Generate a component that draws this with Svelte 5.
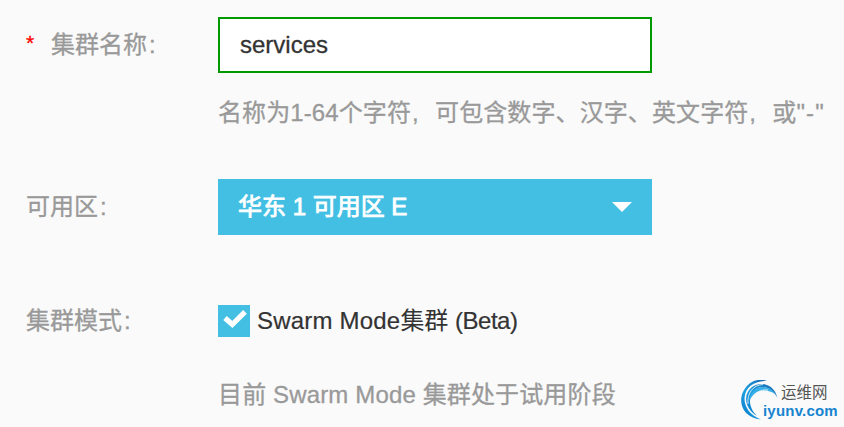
<script>
	let name = 'services';
	let swarm = true;
</script>

<form on:submit|preventDefault>
	<div class="row">
		<label class="label" for="name"><span class="required">*</span>集群名称<i class="colon">:</i></label>
		<div class="field">
			<input id="name" class="name" type="text" bind:value={name} />
			<p class="hint first">名称为1-64个字符<i class="comma">,</i>可包含数字、汉字、英文字符<i class="comma">,</i>或<span class="quoted">"-"</span></p>
		</div>
	</div>

	<div class="row zone">
		<span class="label">可用区<i class="colon">:</i></span>
		<button type="button" class="select">
			<span>华东 1 可用区 E</span>
			<svg width="20" height="10" viewBox="0 0 20 10"><path d="M0 0h20L10 10z" fill="#fff" /></svg>
		</button>
	</div>

	<div class="row mode">
		<span class="label">集群模式<i class="colon">:</i></span>
		<div class="field">
			<label class="check">
				<input type="checkbox" bind:checked={swarm} />
				<span class="box">
					{#if swarm}
						<svg width="32" height="32" viewBox="0 0 32 32">
							<path d="M7 13l7.3 6.5L27 6.8" fill="none" stroke="#fff" stroke-width="5.2" />
						</svg>
					{/if}
				</span>
				<span class="text"><span class="latin">Swarm Mode</span>集群 <span class="beta">(Beta)</span></span>
			</label>
			<p class="hint second">目前 Swarm Mode 集群处于试用阶段</p>
		</div>
	</div>
</form>

<div class="watermark">
	<svg width="104" height="47" viewBox="0 0 104 47">
		<defs>
			<linearGradient id="arc" x1="0" y1="1" x2="1" y2="0">
				<stop offset="0" stop-color="#0a78c8" />
				<stop offset=".45" stop-color="#1ba0e2" />
				<stop offset="1" stop-color="#1d62a8" />
			</linearGradient>
		</defs>
		<path d="M21 39.5C3 38-3 22 4 10 10 0 20-2 27 1 16 1 9 5 5.500 13 2 23 8 35 21 39.500z" fill="url(#arc)" />
		<path d="M17 36C4 28 3 14 12 7c9-6 22-3 25.500 11C31 6 20 4 13.500 11.500c-6 7-4 17 3.500 24.500z" fill="url(#arc)" />
		<path d="M9.500 21C10 12 16 6.500 23 7c5 0 10 3 12 7-8-6-21-5-25.500 7z" fill="#35aee8" />
		<path d="M8 24C7 13 13 5 23 4.500M11 23c1-9 8-14 17-13" fill="none" stroke="#fafafa" stroke-width=".8" />
	</svg>
	<span class="brand">运维网</span>
	<span class="domain">iyunv.com</span>
</div>

<style>
	:global(body) {
		background: #fafafa;
		overflow: hidden;
	}

	form {
		box-sizing: border-box;
		height: 427px;
		padding: 17px 0 0 26px;
		color: #999;
		font: 24px/32px 'Liberation Sans', 'Noto Sans CJK SC', sans-serif;
		-webkit-text-stroke: 0.3px;
	}

	.row {
		display: flex;
	}

	.label {
		width: 192px;
		flex: none;
		line-height: 55px;
		white-space: nowrap;
	}

	.required {
		display: inline-block;
		width: 25px;
		color: #f00;
		font-size: 21px;
		line-height: 1;
		transform: translateY(-3px);
	}

	i {
		font-style: normal;
	}

	.colon {
		margin-left: 2px;
	}

	.comma {
		display: inline-block;
		width: 24px;
		text-indent: 1px;
	}

	.name {
		box-sizing: border-box;
		display: block;
		width: 434px;
		height: 56px;
		padding: 0 20px;
		border: 2px solid #090;
		border-radius: 0;
		outline: 0;
		background: #fff;
		color: #333;
		font: inherit;
		-webkit-text-stroke: 0.3px;
	}

	.hint {
		margin: 0;
		white-space: nowrap;
		letter-spacing: 0.1px;
	}

	.quoted {
		letter-spacing: 1.1px;
	}

	.first {
		margin-top: 24px;
	}

	.zone {
		margin-top: 50px;
	}

	.select {
		display: flex;
		align-items: center;
		justify-content: space-between;
		width: 434px;
		height: 56px;
		padding: 0 20px;
		border: 0;
		background: #43bfe3;
		color: #fff;
		font: 24px/56px 'Liberation Sans', 'Noto Sans CJK SC', sans-serif;
		-webkit-text-stroke: 0.8px;
	}

	.select svg {
		margin-bottom: 1px;
	}

	.mode {
		margin-top: 58px;
	}

	.check {
		display: flex;
		align-items: center;
		height: 56px;
		color: #333;
		-webkit-text-stroke: 0;
	}

	.check input {
		position: absolute;
		opacity: 0;
	}

	.box {
		width: 32px;
		height: 32px;
		margin-right: 7px;
		background: #43bfe3;
	}

	.box svg {
		display: block;
	}

	.latin {
		letter-spacing: 0.2px;
		-webkit-text-stroke: 0.2px;
	}

	.beta {
		letter-spacing: -0.5px;
		-webkit-text-stroke: 0.2px;
	}

	.second {
		margin-top: 30px;
		letter-spacing: 0.14px;
	}

	.watermark {
		position: absolute;
		top: 380px;
		left: 740px;
		width: 104px;
		height: 47px;
		font-family: 'Liberation Sans', 'Noto Sans CJK SC', sans-serif;
	}

	.brand {
		position: absolute;
		top: 2px;
		left: 41px;
		color: #555;
		font-size: 15.5px;
		line-height: 22px;
		white-space: nowrap;
	}

	.domain {
		position: absolute;
		top: 21px;
		left: 23px;
		color: #1684cf;
		font-size: 15px;
		font-weight: bold;
		letter-spacing: 0.2px;
		line-height: 20px;
	}
</style>
